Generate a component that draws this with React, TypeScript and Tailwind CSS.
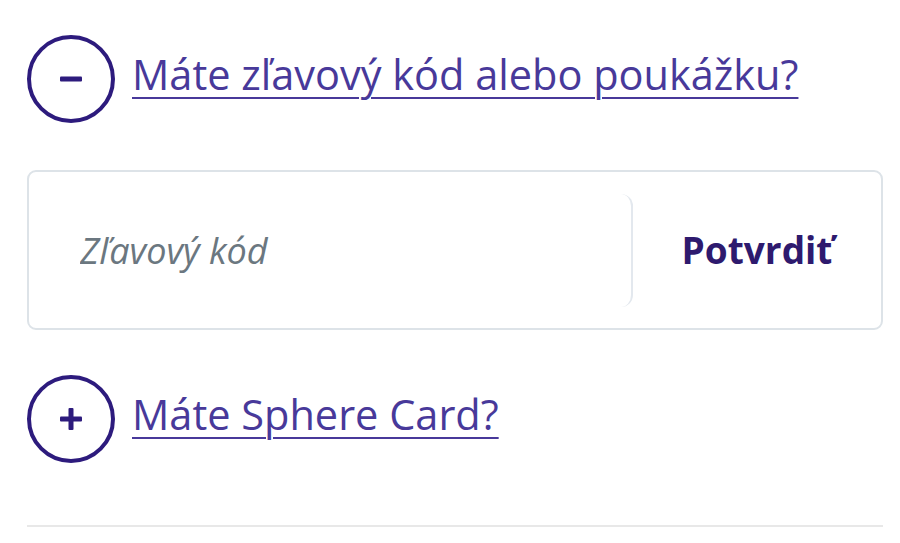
import { useState } from 'react';

function ToggleIcon({ open }: { open: boolean }) {
  return (
    <span className="flex h-[88px] w-[88px] shrink-0 items-center justify-center rounded-full border-[4px] border-[#2d1b7d]">
      <svg width="26" height="26" viewBox="0 0 26 26" fill="none">
        <rect x="2" y="10.5" width="22" height="5" rx="1" fill="#2d1b7d" />
        {!open && <rect x="10.5" y="2" width="5" height="22" rx="1" fill="#2d1b7d" />}
      </svg>
    </span>
  );
}

export default function App() {
  const [voucherOpen, setVoucherOpen] = useState(true);
  const [cardOpen, setCardOpen] = useState(false);
  const [code, setCode] = useState('');

  return (
    <div
      className="w-[900px] h-[543px] bg-white pl-[27px] pr-[17px] pt-[35px]"
      style={{ fontFamily: '"Open Sans", "Noto Sans", sans-serif' }}
    >
      {/* Voucher */}
      <button
        className="flex items-center gap-[17px] text-left"
        onClick={() => setVoucherOpen(!voucherOpen)}
      >
        <ToggleIcon open={voucherOpen} />
        <span className="mb-[8px] text-[41.5px] leading-none text-[#48399a] underline decoration-2 underline-offset-[7px]">
          Máte zľavový kód alebo poukážku?
        </span>
      </button>

      {voucherOpen && (
        <div className="mt-[47px] flex h-[160px] items-center rounded-[9px] border-2 border-[#dde3e8]">
          <input
            type="text"
            placeholder="Zľavový kód"
            value={code}
            onChange={(e) => setCode(e.target.value)}
            className="h-[113px] w-[604px] rounded-r-[12px] border-r-2 border-[#e3e8ee] bg-white pl-[51px] text-[36px] italic text-[#3a4650] outline-none placeholder:text-[#6b7780]"
          />
          <button className="flex-1 text-center text-[37px] font-bold text-[#2e1a6e]">
            Potvrdiť
          </button>
        </div>
      )}

      {/* Sphere card */}
      <button
        className="mt-[45px] flex items-center gap-[17px] text-left"
        onClick={() => setCardOpen(!cardOpen)}
      >
        <ToggleIcon open={cardOpen} />
        <span className="mb-[8px] text-[41.5px] leading-none text-[#48399a] underline decoration-2 underline-offset-[7px]">
          Máte Sphere Card?
        </span>
      </button>

      <div className="mt-[62px] h-[2px] bg-[#e8e8e8]" />
    </div>
  );
}
